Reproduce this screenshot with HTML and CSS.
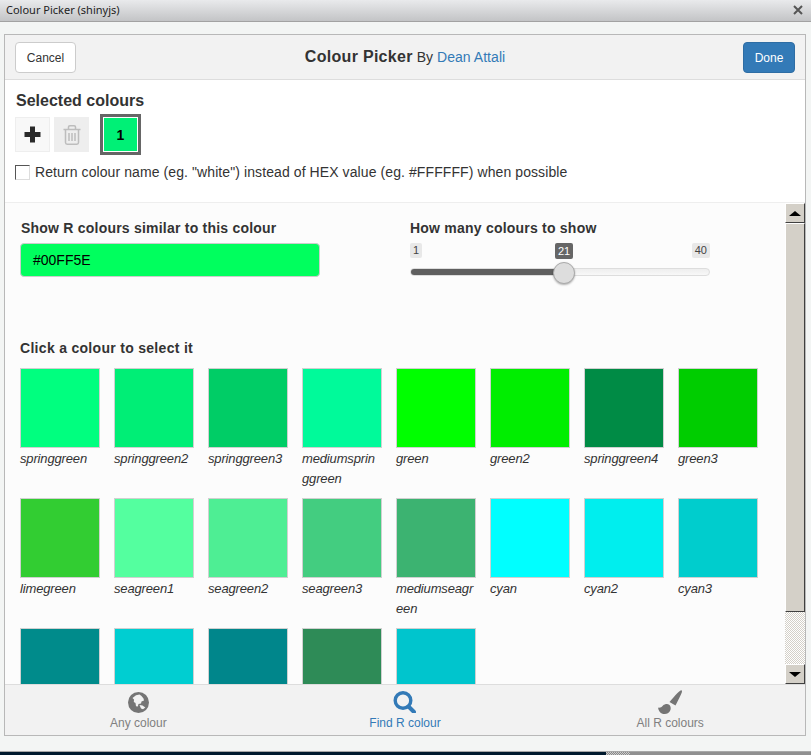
FILE: index.html
```html
<!DOCTYPE html>
<html lang="en">
<head>
<meta charset="utf-8">
<title>Colour Picker (shinyjs)</title>
<link rel="stylesheet" href="styles.css">
</head>
<body>
<div class="app">
  <div class="titlebar">
    <span class="titlebar-text">Colour Picker (shinyjs)</span>
    <svg class="close-icon" width="10" height="10" viewBox="0 0 10 10"><path d="M1 1L9 9M9 1L1 9" stroke="#555" stroke-width="2" fill="none"/></svg>
  </div>
  <div class="window">
    <div class="panel">
      <header class="header">
        <button class="btn btn-default">Cancel</button>
        <div class="heading"><strong class="heading-title">Colour Picker</strong> By <a class="heading-link">Dean Attali</a></div>
        <button class="btn btn-primary">Done</button>
      </header>
      <section class="selected">
        <h4 class="selected-title">Selected colours</h4>
        <div class="tools">
          <div class="tool tool-add">
            <svg width="17" height="17" viewBox="0 0 17 17"><path d="M6 0.5h5V6h5.500v5H11v5.500H6V11H0.500V6H6z" fill="#2a2a2a"/></svg>
          </div>
          <div class="tool tool-del">
            <svg width="18" height="20" viewBox="0 0 18 20" fill="none" stroke="#bdbdbd"><path d="M0.500 4.500H17.500" stroke-width="1.500"/><path d="M5.500 4V2Q5.500 0.800 6.800 0.800H11.200Q12.500 0.800 12.500 2V4" stroke-width="1.500"/><path d="M2.500 4.500V17.500Q2.500 19.200 4.200 19.200H13.800Q15.500 19.200 15.500 17.500V4.500" stroke-width="1.500"/><path d="M6 8V16M9 8V16M12 8V16" stroke-width="1.500"/></svg>
          </div>
          <div class="chosen"><div class="chosen-fill">1</div></div>
        </div>
        <label class="check-row"><span class="checkbox"></span><span>Return colour name (eg. "white") instead of HEX value (eg. #FFFFFF) when possible</span></label>
      </section>
      <div class="scroller">
        <div class="scroll-content">
          <div class="controls">
            <div class="control">
              <label class="label label-first">Show R colours similar to this colour</label>
              <div class="hex-input">#00FF5E</div>
            </div>
            <div class="control">
              <label class="label">How many colours to show</label>
              <div class="slider">
                <div class="ticks"><span class="tick">1</span><span class="tick">40</span></div>
                <span class="tick tick-current">21</span>
                <div class="track"><div class="track-fill"></div></div>
                <div class="handle"></div>
              </div>
            </div>
          </div>
          <h5 class="label grid-title">Click a colour to select it</h5>
          <div class="swatches">
            <div class="cell"><div class="swatch" style="background:#00FF7F"></div><div class="name">springgreen</div></div>
            <div class="cell"><div class="swatch" style="background:#00EE76"></div><div class="name">springgreen2</div></div>
            <div class="cell"><div class="swatch" style="background:#00CD66"></div><div class="name">springgreen3</div></div>
            <div class="cell"><div class="swatch" style="background:#00FA9A"></div><div class="name">mediumsprin<wbr>ggreen</div></div>
            <div class="cell"><div class="swatch" style="background:#00FF00"></div><div class="name">green</div></div>
            <div class="cell"><div class="swatch" style="background:#00EE00"></div><div class="name">green2</div></div>
            <div class="cell"><div class="swatch" style="background:#008B45"></div><div class="name">springgreen4</div></div>
            <div class="cell"><div class="swatch" style="background:#00CD00"></div><div class="name">green3</div></div>
            <div class="cell"><div class="swatch" style="background:#32CD32"></div><div class="name">limegreen</div></div>
            <div class="cell"><div class="swatch" style="background:#54FF9F"></div><div class="name">seagreen1</div></div>
            <div class="cell"><div class="swatch" style="background:#4EEE94"></div><div class="name">seagreen2</div></div>
            <div class="cell"><div class="swatch" style="background:#43CD80"></div><div class="name">seagreen3</div></div>
            <div class="cell"><div class="swatch" style="background:#3CB371"></div><div class="name">mediumseagr<wbr>een</div></div>
            <div class="cell"><div class="swatch" style="background:#00FFFF"></div><div class="name">cyan</div></div>
            <div class="cell"><div class="swatch" style="background:#00EEEE"></div><div class="name">cyan2</div></div>
            <div class="cell"><div class="swatch" style="background:#00CDCD"></div><div class="name">cyan3</div></div>
            <div class="cell"><div class="swatch" style="background:#008B8B"></div></div>
            <div class="cell"><div class="swatch" style="background:#00CED1"></div></div>
            <div class="cell"><div class="swatch" style="background:#00868B"></div></div>
            <div class="cell"><div class="swatch" style="background:#2E8B57"></div></div>
            <div class="cell"><div class="swatch" style="background:#00C5CD"></div></div>
          </div>
        </div>
        <div class="scrollbar">
          <div class="sb-btn"><span class="arrow-up"></span></div>
          <div class="sb-thumb"></div>
          <div class="sb-track"></div>
          <div class="sb-btn"><span class="arrow-down"></span></div>
        </div>
      </div>
      <footer class="tabs">
        <div class="tab">
          <svg width="21" height="21" viewBox="0 0 21 21"><circle cx="10.500" cy="10.500" r="10.500" fill="#757575"/><path d="M4.500 6L8 3.200L11.500 2.500L13.500 4L15.500 6.500L16 8.500L13.500 9.500L13 11.500L10.500 12L9.800 14.500L8 14.300L7.500 11L5.800 10L6 7.500z" fill="#f2f2f2"/><path d="M11.500 13L14.500 13.500L17.300 15.500L15 17.300L13 16.500z" fill="#f2f2f2"/></svg>
          <span>Any colour</span>
        </div>
        <div class="tab tab-active">
          <svg width="23" height="22" viewBox="0 0 23 22" fill="none" stroke="#337ab7"><circle cx="10" cy="9.500" r="7.800" stroke-width="3.400"/><path d="M15.500 15.500L21 21" stroke-width="4" stroke-linecap="round"/></svg>
          <span>Find R colour</span>
        </div>
        <div class="tab tab-last">
          <svg class="brush" width="24" height="24" viewBox="0 0 24 24" fill="#757575"><path d="M23.500 0.300C24.500 0.800 24 3 22 6.500C21 8.500 19.500 11.500 17.500 15.500L11.500 12C14 9 17 5.500 19 3.500C21 1.500 22.800 0 23.500 0.300z"/><path d="M0 17.500C1.500 18 3.500 17.500 5 15.500C7 14 9.500 13.500 11.500 15C13 16.500 13 19 12 21C10.500 23.500 7.500 24.500 4.500 23.800C2 23 0.500 20.500 0 17.500z"/></svg>
          <span>All R colours</span>
        </div>
      </footer>
    </div>
  </div>
  <div class="desktop">
    <div class="desktop-dark"></div>
    <div class="desktop-check"></div>
    <div class="desktop-grey"></div>
  </div>
</div>
</body>
</html>
```
FILE: styles.css
```css
* { box-sizing: border-box; }
html, body { margin: 0; padding: 0; height: 100%; overflow: hidden; }
body { font-family: "Liberation Sans", Arial, sans-serif; font-size: 14px; line-height: 20px; color: #333; background: #f3f5f4; }
.app { display: flex; flex-direction: column; height: 755px; }

.titlebar { flex: 0 0 22px; display: flex; align-items: center; justify-content: space-between; padding: 0 8px 2px 6px; background: linear-gradient(#e9eaec, #c3c4c6); border-bottom: 1px solid #a2a2a2; }
.titlebar-text { font-family: "Noto Sans", sans-serif; font-size: 11px; line-height: 16px; color: #222; }

.window { flex: 1; min-height: 0; display: flex; padding: 12px 5px 15px 4px; background: #f3f5f4; }
.panel { flex: 1; min-width: 0; display: flex; flex-direction: column; border: 1px solid #b8b8b8; background: #fff; }

.header { flex: 0 0 45px; display: grid; grid-template-columns: 1fr auto 1fr; align-items: start; padding: 7px 10px 0 10px; background: #f2f2f2; border-bottom: 1px solid #ddd; }
.btn { height: 31px; padding: 0 10px; border: 1px solid #ccc; border-radius: 4px; font: 12px/20px "Liberation Sans", Arial, sans-serif; background: #fff; color: #333; }
.btn-default { width: 61px; justify-self: start; }
.btn-primary { width: 52px; justify-self: end; background: #337ab7; border-color: #2e6da4; color: #fff; }
.heading { font-size: 14px; line-height: 30px; color: #333; letter-spacing: 0.04px; }
.heading-title { font-size: 16px; letter-spacing: 0.3px; }
.heading-link { color: #337ab7; }

.selected { flex: 0 0 123px; padding: 11px 10px 0; border-bottom: 1px solid #eee; background: #fff; }
.selected-title { margin: 0 0 0 1px; font-size: 16px; line-height: 20px; font-weight: bold; color: #333; }
.tools { display: flex; align-items: center; margin-top: 3px; height: 41px; }
.tool { width: 35px; height: 35px; display: flex; align-items: center; justify-content: center; }
.tool-add { background: #f8f8f8; border: 1px solid #eee; }
.tool-del { margin-left: 4px; background: #eee; }
.chosen { margin-left: 11px; width: 41px; height: 41px; border: 3px solid #666; padding: 1px; background: #fff; }
.chosen-fill { width: 33px; height: 33px; display: flex; align-items: center; justify-content: center; background: #00f076; color: #000; font-weight: bold; font-size: 14px; }
.check-row { display: flex; align-items: center; margin-top: 7px; gap: 5px; color: #333; letter-spacing: 0.09px; }
.checkbox { width: 15px; height: 15px; background: #fff; border: 1px solid; border-color: #555 #ddd #ddd #555; }

.scroller { flex: 1; min-height: 0; display: flex; background: #fcfcfc; }
.scroll-content { flex: 1; min-width: 0; overflow: hidden; padding: 15px 0 0 15px; }
.controls { display: flex; gap: 90px; height: 120px; }
.control { width: 300px; }
.label { display: block; margin: 0; font-size: 14px; line-height: 20px; font-weight: bold; color: #333; letter-spacing: 0.22px; }
.label-first { margin-left: 1px; }
.hex-input { height: 34px; margin-top: 5px; padding: 0 12px; border: 1px solid #ccc; border-radius: 4px; background: #00ff5e; color: #000; line-height: 32px; }
.slider { position: relative; height: 40px; margin-top: 5px; }
.ticks { display: flex; justify-content: space-between; }
.tick { height: 15px; padding: 0 3px; border-radius: 2px; background: #e8e8e8; color: #444; font-size: 11px; line-height: 15px; }
.tick-current { position: absolute; top: 0; left: 145px; height: 16px; background: #666; color: #fff; line-height: 16px; }
.track { height: 8px; margin-top: 10px; border-radius: 4px; border: 1px solid #ddd; background: linear-gradient(#eee, #f8f8f8); overflow: hidden; }
.track-fill { width: 155px; height: 8px; margin: -1px 0 0 -1px; background: #5f5f5f; }
.handle { position: absolute; left: 143px; top: 19px; width: 22px; height: 22px; border-radius: 50%; background: #ddd; border: 1px solid #aaa; box-shadow: 0 1px 2px rgba(0,0,0,.3); }

.grid-title { margin-top: 0; margin-bottom: 10px; letter-spacing: 0.3px; }
.swatches { display: grid; grid-template-columns: repeat(8, 80px); grid-auto-rows: 120px; column-gap: 14px; row-gap: 10px; }
.swatch { height: 80px; border: 1px solid #d0d0d0; }
.name { margin-top: 1px; font-size: 13px; letter-spacing: -0.15px; line-height: 20px; font-style: italic; color: #333; }

.scrollbar { flex: 0 0 20px; display: flex; flex-direction: column; background: #d4d0c8; }
.sb-btn { flex: 0 0 20px; display: flex; align-items: center; justify-content: center; background: #d4d0c8; border: 1px solid; border-color: #fff #404040 #404040 #fff; }
.sb-thumb { flex: 0 0 389px; background: #d4d0c8; border: 1px solid; border-color: #fff #404040 #404040 #fff; }
.sb-track { flex: 1; background-color: #fff; background-image: repeating-conic-gradient(#d4d0c8 0 25%, #fff 0 50%); background-size: 2px 2px; }
.arrow-up { width: 0; height: 0; border-left: 6px solid transparent; border-right: 6px solid transparent; border-bottom: 5px solid #000; }
.arrow-down { width: 0; height: 0; border-left: 6px solid transparent; border-right: 6px solid transparent; border-top: 5px solid #000; }

.tabs { flex: 0 0 51px; display: grid; grid-template-columns: repeat(3, 1fr); background: #f2f2f2; border-top: 1px solid #ddd; }
.tab { display: flex; flex-direction: column; align-items: center; justify-content: flex-end; padding-bottom: 2px; font-size: 12px; line-height: 20px; color: #808080; }
.tab svg { display: block; }
.tab .brush { margin-bottom: -1px; }
.tab-last { padding-right: 3px; }
.tab-active { color: #337ab7; }

.desktop { flex: 0 0 4px; display: flex; border-top: 1px solid #a8a8a8; }
.desktop-dark { width: 606px; background: #001a2e; }
.desktop-check { width: 24px; background-image: repeating-conic-gradient(#888 0 25%, #ccc 0 50%); background-size: 2px 2px; }
.desktop-grey { flex: 1; background: #909090; }
```
